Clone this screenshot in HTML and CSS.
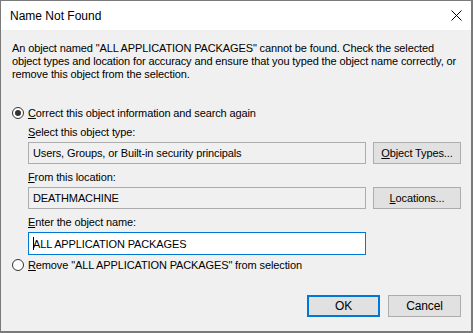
FILE: index.html
```html
<!DOCTYPE html>
<html lang="en">
<head>
  <meta charset="UTF-8" />
  <title>Name Not Found</title>
  <link rel="stylesheet" href="styles.css">
</head>
<body>
  <div class="window">
    <!-- Заголовок окна -->
    <div class="titlebar">
      <span class="title">Name Not Found</span>
      <svg class="close" width="11" height="11" viewBox="0 0 11 11">
        <path d="M0.5 0.5 L10.5 10.5 M10.5 0.5 L0.5 10.5" stroke="#000" stroke-width="1" fill="none"/>
      </svg>
    </div>

    <div class="content">
      <p class="message">An object named "ALL APPLICATION PACKAGES" cannot be found. Check the selected object types and location for accuracy and ensure that you typed the object name correctly, or remove this object from the selection.</p>

      <label class="radio-row">
        <span class="radio checked"></span>
        <span><u>C</u>orrect this object information and search again</span>
      </label>

      <div class="fields">
        <div class="field-label"><u>S</u>elect this object type:</div>
        <div class="field-row">
          <div class="textbox disabled">Users, Groups, or Built-in security principals</div>
          <button class="btn"><u>O</u>bject Types...</button>
        </div>

        <div class="field-label"><u>F</u>rom this location:</div>
        <div class="field-row">
          <div class="textbox disabled">DEATHMACHINE</div>
          <button class="btn"><u>L</u>ocations...</button>
        </div>

        <div class="field-label"><u>E</u>nter the object name:</div>
        <div class="field-row">
          <div class="textbox active"><span class="caret"></span>ALL APPLICATION PACKAGES</div>
        </div>
      </div>

      <label class="radio-row second">
        <span class="radio"></span>
        <span><u>R</u>emove "ALL APPLICATION PACKAGES" from selection</span>
      </label>

      <!-- Кнопки внизу -->
      <div class="actions">
        <button class="btn default">OK</button>
        <button class="btn">Cancel</button>
      </div>
    </div>
  </div>
</body>
</html>
```

FILE: styles.css
```css
:root {
  --bg-color: #f0f0f0;
  --border-color: #7a7a7a;
  --field-border: #adadad;
  --accent: #0078d7;
  --text-color: #000;
}
* {
  box-sizing: border-box;
}
body {
  margin: 0;
  font-family: 'Liberation Sans', Arial, sans-serif;
  font-size: 11px;
  letter-spacing: -0.12px;
  color: var(--text-color);
  background: #fff;
}
u {
  text-decoration: underline;
  text-underline-offset: 1px;
}
/* Окно диалога */
.window {
  width: 473px;
  height: 333px;
  border: 1px solid var(--border-color);
  border-right-width: 2px;
  border-bottom-width: 2px;
  background: var(--bg-color);
  display: flex;
  flex-direction: column;
}
.titlebar {
  height: 29px;
  background: #fff;
  display: flex;
  align-items: center;
  padding: 0 9px 0 9px;
}
.title {
  font-size: 12px;
  letter-spacing: 0;
  margin-top: 1px;
}
.close {
  flex: none;
  margin-left: auto;
  width: 11px;
  height: 11px;
}
.content {
  flex: 1;
  padding: 12px 10px 0 11px;
  display: flex;
  flex-direction: column;
}
.message {
  margin: 0;
  line-height: 13px;
}
/* Радиокнопки */
.radio-row {
  display: flex;
  align-items: center;
  gap: 4px;
  height: 14px;
  line-height: 13px;
  margin-top: 25px;
}
.radio-row.second {
  margin-top: 3px;
}
.radio {
  width: 12px;
  height: 12px;
  border: 1px solid #333;
  border-radius: 50%;
  background: #fff;
  position: relative;
  flex: none;
}
.radio.checked::after {
  content: '';
  position: absolute;
  left: 2px;
  top: 2px;
  width: 6px;
  height: 6px;
  border-radius: 50%;
  background: #333;
}
.fields {
  padding-left: 16px;
  display: flex;
  flex-direction: column;
}
.field-label {
  line-height: 13px;
  margin-top: 6px;
  margin-bottom: 3px;
}
.field-label + .field-row + .field-label {
  margin-top: 7px;
}
.field-row {
  display: flex;
  gap: 7px;
}
.textbox {
  width: 338px;
  height: 22px;
  border: 1px solid var(--field-border);
  padding: 0 4px;
  display: flex;
  align-items: center;
  background: var(--bg-color);
  white-space: nowrap;
}
.textbox.active {
  background: #fff;
  border-color: var(--accent);
  height: 23px;
}
.caret {
  width: 1px;
  height: 13px;
  background: #000;
  margin-right: -1px;
}
/* Кнопки */
.btn {
  font-family: inherit;
  font-size: 11px;
  letter-spacing: -0.12px;
  color: var(--text-color);
  background: #e1e1e1;
  border: 1px solid var(--field-border);
  height: 22px;
  width: 88px;
  padding: 0;
}
.actions {
  margin-top: auto;
  margin-bottom: 14px;
  display: flex;
  justify-content: flex-end;
  gap: 8px;
}
.actions .btn {
  width: 73px;
  font-size: 12px;
}
.btn.default {
  border: 2px solid var(--accent);
}
```
